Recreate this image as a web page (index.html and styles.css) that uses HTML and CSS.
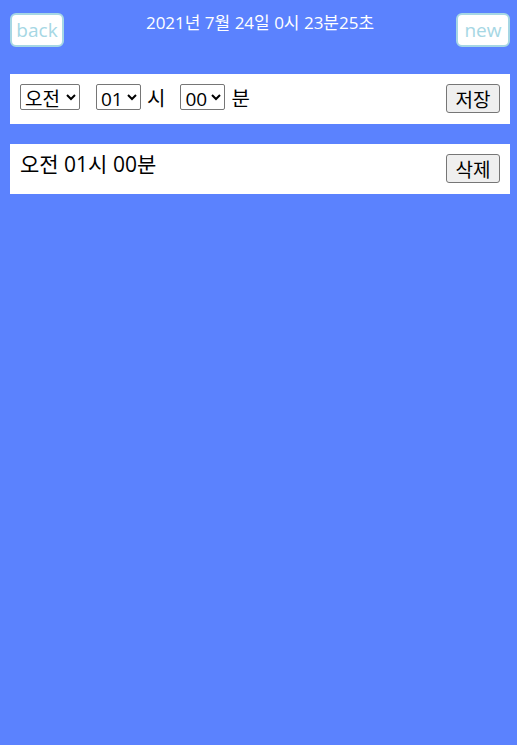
FILE: index.html
```html
<!DOCTYPE html>
<html lang="ko">
<head>
<meta charset="utf-8">
<link rel="stylesheet" href="styles.css">
</head>
<body>
<div class="app">
  <header class="top">
    <button class="nav-btn">back</button>
    <div class="clock">2021년 7월 24일 0시 23분25초</div>
    <button class="nav-btn">new</button>
  </header>
  <section class="row">
    <div class="pickers">
      <select class="sel sel-ampm"><option>오전</option><option>오후</option></select>
      <select class="sel sel-num"><option>01</option></select>
      <span class="unit">시</span>
      <select class="sel sel-num"><option>00</option></select>
      <span class="unit">분</span>
    </div>
    <button class="act-btn">저장</button>
  </section>
  <section class="row">
    <div class="alarm-text">오전 01시 00분</div>
    <button class="act-btn">삭제</button>
  </section>
</div>
</body>
</html>
```
FILE: styles.css
```css
html, body {
  margin: 0;
  padding: 0;
  height: 100%;
}
body {
  background: #5b82fe;
  font-family: "Open Sans", "Noto Sans CJK KR", sans-serif;
}
.app {
  padding: 13px 7px 0 10px;
}
.top {
  display: flex;
  justify-content: space-between;
  align-items: flex-start;
  height: 61px;
}
.nav-btn {
  box-sizing: border-box;
  width: 54px;
  height: 34px;
  padding: 0;
  background: #fff;
  border: 2px solid #a6d7e4;
  border-radius: 6px;
  color: #a6d7e4;
  font-family: "Open Sans", sans-serif;
  font-size: 19px;
}
.clock {
  color: #fff;
  font-size: 17px;
  line-height: 20px;
  margin-top: 0;
}
.row {
  box-sizing: border-box;
  display: flex;
  justify-content: space-between;
  align-items: flex-start;
  width: 500px;
  height: 50px;
  margin-bottom: 20px;
  padding: 10px 10px 0 10px;
  background: #fff;
}
.pickers {
  display: flex;
  align-items: center;
  font-size: 20px;
  height: 26px;
}
.sel {
  box-sizing: border-box;
  height: 26px;
  font-family: "Open Sans", "Noto Sans CJK KR", sans-serif;
  font-size: 19px;
  color: #000;
  background: #fff;
  border: 1px solid #767676;
  border-radius: 2px;
  padding: 0;
}
.sel-ampm { width: 60px; }
.sel-num { width: 45px; }
.sel + .sel { margin-left: 16px; }
.unit {
  margin-left: 6px;
  margin-right: 15px;
  color: #000;
}
.unit:last-child { margin-right: 0; }
.alarm-text {
  font-size: 21px;
  line-height: 24px;
  margin-top: -2px;
  color: #000;
}
.act-btn {
  box-sizing: border-box;
  width: 54px;
  height: 29px;
  padding: 0;
  font-family: "Noto Sans CJK KR", sans-serif;
  font-size: 19px;
  color: #000;
  background: #efefef;
  border: 1px solid #767676;
  border-radius: 3px;
}
```
